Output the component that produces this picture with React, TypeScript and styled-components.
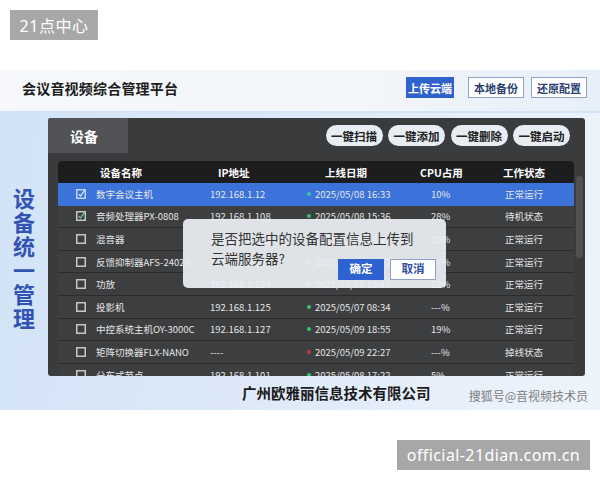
import React from 'react';
import styled, { createGlobalStyle } from 'styled-components';

const GlobalStyle = createGlobalStyle`
  html, body {
    margin: 0;
    padding: 0;
    background: #ffffff;
    font-family: "Noto Sans CJK SC", "Noto Sans", sans-serif;
  }
`;

const Page = styled.div`
  width: 600px;
  height: 480px;
  display: flex;
  flex-direction: column;
  overflow: hidden;
`;

const Badge = styled.div<{ $wide?: boolean }>`
  height: 30px;
  display: flex;
  align-items: center;
  justify-content: center;
  background: #a7a7a7;
  color: #ffffff;
  font-size: 16px;
  letter-spacing: ${(p) => (p.$wide ? '0.4px' : '0.5px')};
  font-family: "Noto Sans", "Noto Sans CJK SC", sans-serif;
`;

const TopBadge = styled(Badge)`
  width: 88px;
  margin: 10px 0 0 10px;
`;

const BottomBadge = styled(Badge)`
  width: 193px;
  align-self: flex-end;
  margin: 30px 10px 0 0;
`;

const Banner = styled.div`
  margin-top: 30px;
  height: 340px;
  display: flex;
  flex-direction: column;
  background: linear-gradient(100deg, #d2e3f7 0%, #dde9f8 45%, #eef4fb 100%);
`;

const HeaderBar = styled.div`
  height: 43px;
  display: flex;
  align-items: center;
  justify-content: space-between;
  padding: 0 13px 6px 22px;
  box-sizing: border-box;
  background: linear-gradient(90deg, #f6f8fb 0%, #f3f6fa 60%, #e7eff9 100%);
  border-bottom: 2px solid #d4e4f7;
`;

const Title = styled.div`
  font-size: 14px;
  font-weight: 700;
  color: #1c1c1c;
  letter-spacing: 0.2px;
`;

const HeaderActions = styled.div`
  display: flex;
  gap: 7px;
`;

const HeaderButton = styled.div<{ $primary?: boolean }>`
  height: 21px;
  box-sizing: border-box;
  display: flex;
  align-items: center;
  padding: ${(p) => (p.$primary ? '0 1px' : '0 5px')};
  margin-right: ${(p) => (p.$primary ? '7px' : '0')};
  font-size: 11px;
  font-weight: 700;
  background: ${(p) => (p.$primary ? '#2f63c9' : '#ffffff')};
  color: ${(p) => (p.$primary ? '#ffffff' : '#2a3f6e')};
  border: 1px solid ${(p) => (p.$primary ? '#2f63c9' : '#8fa3c4')};
`;

const Body = styled.div`
  flex: 1;
  display: grid;
  grid-template-columns: 48px 537px 1fr;
  grid-template-rows: 258px 1fr;
  padding-top: 5px;
`;

const SideLabel = styled.div`
  display: flex;
  flex-direction: column;
  align-items: center;
  padding-top: 67px;
  font-size: 22px;
  line-height: 24px;
  font-weight: 700;
  color: #3253b3;
`;

const Panel = styled.div`
  position: relative;
  background: #3a3b3d;
  border-radius: 3px;
  display: flex;
  flex-direction: column;
  overflow: hidden;
`;

const TabRow = styled.div`
  height: 35px;
  display: flex;
  align-items: center;
  justify-content: space-between;
  padding-right: 15px;
`;

const Tab = styled.div`
  width: 80px;
  height: 100%;
  box-sizing: border-box;
  padding-left: 22px;
  display: flex;
  align-items: center;
  background: #525356;
  color: #ffffff;
  font-size: 14px;
  font-weight: 700;
`;

const PillGroup = styled.div`
  display: flex;
  gap: 5.5px;
`;

const Pill = styled.div`
  height: 21px;
  width: 57px;
  border-radius: 11px;
  background: #e8edf3;
  color: #222;
  font-size: 11.5px;
  font-weight: 700;
  display: flex;
  align-items: center;
  justify-content: center;
`;

const TableWrap = styled.div`
  flex: 1;
  display: flex;
  margin: 8px 0 0 10px;
  gap: 2px;
  overflow: hidden;
`;

const Table = styled.div`
  width: 516px;
  background: #3d3e40;
  border-radius: 4px;
  overflow: hidden;
`;

const Scrollbar = styled.div`
  width: 7px;
  padding-top: 15px;
`;

const Thumb = styled.div`
  height: 82px;
  background: #505153;
  border-radius: 3px;
`;

const HeaderRow = styled.div`
  height: 22px;
  display: grid;
  grid-template-columns: 42px 118px 107px 95px 83px 1fr;
  align-items: center;
  background: #1c1d1f;
  color: #ffffff;
  font-size: 10.5px;
  font-weight: 700;
`;

const Row = styled.div<{ $selected?: boolean }>`
  height: 22.6px;
  box-sizing: border-box;
  display: grid;
  grid-template-columns: 38px 114px 97px 124px 74px 1fr;
  align-items: center;
  background: ${(p) => (p.$selected ? '#3b73db' : '#3d3e40')};
  border-bottom: 1px solid ${(p) => (p.$selected ? '#3b73db' : '#2a2b2d')};
  color: #e6e6e6;
  font-size: 9.5px;
  white-space: nowrap;
`;

const CheckCell = styled.div`
  display: flex;
  padding-left: 18px;
`;

const DateCell = styled.div`
  display: flex;
  align-items: center;
  gap: 4px;
`;

const Dot = styled.span<{ $color: string }>`
  width: 4px;
  height: 4px;
  border-radius: 50%;
  background: ${(p) => p.$color};
`;

const Dialog = styled.div`
  position: absolute;
  left: 135px;
  top: 101px;
  width: 263px;
  height: 69px;
  box-sizing: border-box;
  padding: 10px 10px 0 28px;
  background: rgba(236, 239, 244, 0.93);
  border-radius: 5px;
  color: #333;
  font-size: 13.5px;
  line-height: 19.5px;
`;

const DialogRow = styled.div`
  display: flex;
  align-items: flex-start;
`;

const DialogButtons = styled.div`
  margin-left: auto;
  margin-top: 10px;
  display: flex;
  gap: 6px;
`;

const DialogButton = styled.div<{ $primary?: boolean }>`
  width: 46px;
  height: 21px;
  box-sizing: border-box;
  display: flex;
  align-items: center;
  justify-content: center;
  font-size: 11.5px;
  font-weight: 700;
  background: ${(p) => (p.$primary ? '#2e62d0' : '#ffffff')};
  color: ${(p) => (p.$primary ? '#ffffff' : '#2e4f9e')};
  border: 1px solid ${(p) => (p.$primary ? '#2e62d0' : '#8da2c9')};
`;

const Footer = styled.div`
  grid-column: 1 / -1;
  display: flex;
  align-items: center;
  padding: 0 12px 2px 242px;
`;

const Company = styled.div`
  font-size: 14.5px;
  font-weight: 700;
  color: #1a1a1a;
`;

const Watermark = styled.div`
  margin-left: auto;
  margin-top: 6px;
  font-size: 12px;
  color: #7b7b7b;
`;

type Device = {
  name: string;
  ip: string;
  date: string;
  cpu: string;
  status: string;
  dot: string;
  checked?: boolean;
  selected?: boolean;
};

const GREEN = '#38c46a';

const devices: Device[] = [
  { name: '数字会议主机', ip: '192.168.1.12', date: '2025/05/08 16:33', cpu: '10%', status: '正常运行', dot: '#35c4a0', checked: true, selected: true },
  { name: '音频处理器PX-0808', ip: '192.168.1.108', date: '2025/05/08 15:36', cpu: '28%', status: '待机状态', dot: GREEN, checked: true },
  { name: '混音器', ip: '192.168.1.110', date: '2025/05/08 14:20', cpu: '35%', status: '正常运行', dot: GREEN },
  { name: '反馈抑制器AFS-2402S', ip: '192.168.1.118', date: '2025/05/08 09:12', cpu: '27%', status: '正常运行', dot: GREEN },
  { name: '功放', ip: '192.168.1.124', date: '2025/05/08 10:45', cpu: '22%', status: '正常运行', dot: GREEN },
  { name: '投影机', ip: '192.168.1.125', date: '2025/05/07 08:34', cpu: '---%', status: '正常运行', dot: GREEN },
  { name: '中控系统主机OY-3000C', ip: '192.168.1.127', date: '2025/05/09 18:55', cpu: '19%', status: '正常运行', dot: GREEN },
  { name: '矩阵切换器FLX-NANO', ip: '----', date: '2025/05/09 22:27', cpu: '---%', status: '掉线状态', dot: '#c0392b' },
  { name: '分布式节点', ip: '192.168.1.101', date: '2025/05/08 17:22', cpu: '5%', status: '正常运行', dot: GREEN },
];

const CheckBox: React.FC<{ checked?: boolean; selected?: boolean }> = ({ checked, selected }) => (
  <svg width="10" height="10" viewBox="0 0 10 10">
    <rect
      x="0.75"
      y="0.75"
      width="8.5"
      height="8.5"
      fill="none"
      stroke={selected ? '#c9d8f5' : '#d0d0d0'}
      strokeWidth="1.4"
    />
    {checked && (
      <path
        d="M2.6 5.2 L4.4 7 L8.8 1.2"
        fill="none"
        stroke={selected ? '#dfe8fb' : '#7ccf8a'}
        strokeWidth="1.2"
      />
    )}
  </svg>
);

const headers = ['设备名称', 'IP地址', '上线日期', 'CPU占用', '工作状态'];
const pills = ['一键扫描', '一键添加', '一键删除', '一键启动'];

export default function App() {
  return (
    <Page>
      <GlobalStyle />
      <TopBadge>21点中心</TopBadge>
      <Banner>
        <HeaderBar>
          <Title>会议音视频综合管理平台</Title>
          <HeaderActions>
            <HeaderButton $primary>上传云端</HeaderButton>
            <HeaderButton>本地备份</HeaderButton>
            <HeaderButton>还原配置</HeaderButton>
          </HeaderActions>
        </HeaderBar>
        <Body>
          <SideLabel>
            {'设备统一管理'.split('').map((c, i) => (
              <span key={i}>{c}</span>
            ))}
          </SideLabel>
          <Panel>
            <TabRow>
              <Tab>设备</Tab>
              <PillGroup>
                {pills.map((p) => (
                  <Pill key={p}>{p}</Pill>
                ))}
              </PillGroup>
            </TabRow>
            <TableWrap>
              <Table>
                <HeaderRow>
                  <span />
                  {headers.map((h) => (
                    <span key={h}>{h}</span>
                  ))}
                </HeaderRow>
                {devices.map((d) => (
                  <Row key={d.name} $selected={d.selected}>
                    <CheckCell>
                      <CheckBox checked={d.checked} selected={d.selected} />
                    </CheckCell>
                    <span>{d.name}</span>
                    <span>{d.ip}</span>
                    <DateCell>
                      <Dot $color={d.dot} />
                      {d.date}
                    </DateCell>
                    <span>{d.cpu}</span>
                    <span>{d.status}</span>
                  </Row>
                ))}
              </Table>
              <Scrollbar>
                <Thumb />
              </Scrollbar>
            </TableWrap>
            <Dialog>
              <div>是否把选中的设备配置信息上传到</div>
              <DialogRow>
                <span>云端服务器?</span>
                <DialogButtons>
                  <DialogButton $primary>确定</DialogButton>
                  <DialogButton>取消</DialogButton>
                </DialogButtons>
              </DialogRow>
            </Dialog>
          </Panel>
          <Footer>
            <Company>广州欧雅丽信息技术有限公司</Company>
            <Watermark>搜狐号@音视频技术员</Watermark>
          </Footer>
        </Body>
      </Banner>
      <BottomBadge $wide>official-21dian.com.cn</BottomBadge>
    </Page>
  );
}
